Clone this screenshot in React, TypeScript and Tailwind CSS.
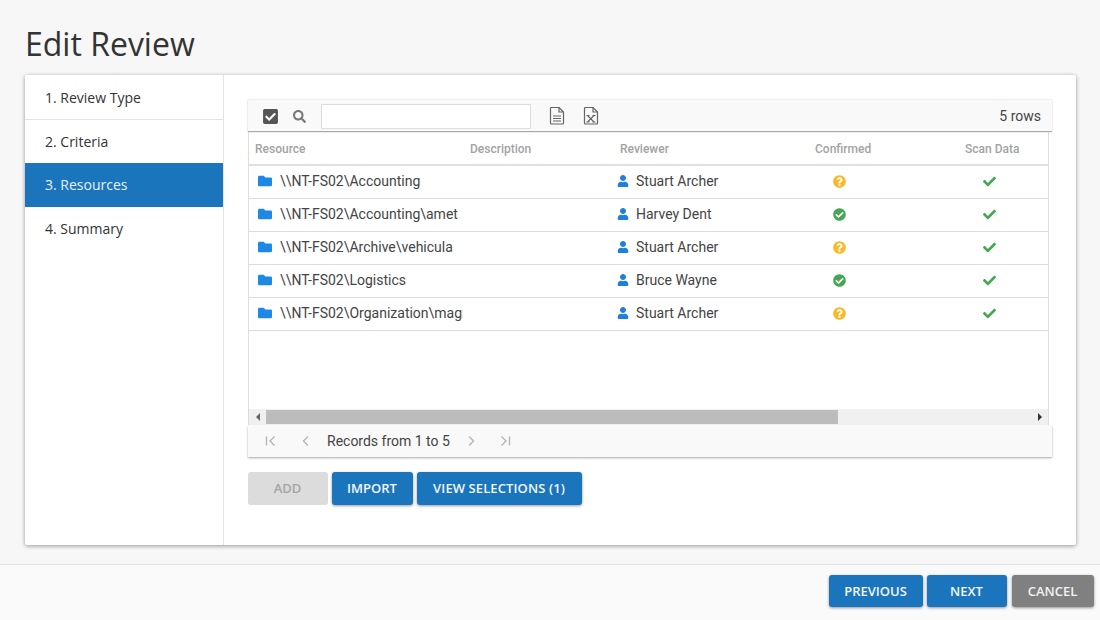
import { FaCheck, FaCheckCircle, FaCheckSquare, FaFolder, FaQuestionCircle, FaSearch, FaUser } from "react-icons/fa";

const steps = ["1. Review Type", "2. Criteria", "3. Resources", "4. Summary"];

const rows = [
  { path: "\\\\NT-FS02\\Accounting", reviewer: "Stuart Archer", confirmed: false },
  { path: "\\\\NT-FS02\\Accounting\\amet", reviewer: "Harvey Dent", confirmed: true },
  { path: "\\\\NT-FS02\\Archive\\vehicula", reviewer: "Stuart Archer", confirmed: false },
  { path: "\\\\NT-FS02\\Logistics", reviewer: "Bruce Wayne", confirmed: true },
  { path: "\\\\NT-FS02\\Organization\\magna", reviewer: "Stuart Archer", confirmed: false },
];

const headers = ["Resource", "Description", "Reviewer", "Confirmed", "Scan Data"];

const gridCols = "grid grid-cols-[214px_150px_195px_150px_90px]";
const btn = "h-[33px] rounded-[3px] text-[13px] font-semibold flex items-center justify-center pr-px";
const btnBlue = `${btn} bg-[#1b75bc] text-[#f2f7fb] shadow-[0_1px_3px_rgba(0,0,0,0.4)]`;

const DocIcon = ({ excel }: { excel?: boolean }) => (
  <svg width="16" height="18" viewBox="0 0 16 18" fill="none" stroke="#666" strokeWidth="1.2">
    <path d="M1.5 1.5a1 1 0 0 1 1-1h7.5l4.500 4.500v11a1 1 0 0 1-1 1h-11a1 1 0 0 1-1-1z" />
    <path d="M10 .5v4.500h4.500" />
    {excel ? (
      <path d="M4.500 8.500l6.500 6.500M11 8.500l-6.500 6.500M3.500 8.500h3M9.500 8.500h3M3.500 15h3M9.500 15h3" strokeWidth="1.100" />
    ) : (
      <path d="M4 9h8M4 11.500h8M4 14h8" />
    )}
  </svg>
);

const PagerIcon = ({ d }: { d: string }) => (
  <svg width="12" height="12" viewBox="0 0 12 12" fill="none" stroke="#b5b5b5" strokeWidth="1.400">
    <path d={d} />
  </svg>
);

export default function App() {
  return (
    <div className="w-[1100px] h-[620px] bg-[#f7f7f7] flex flex-col overflow-hidden font-['Open_Sans',sans-serif] text-[#333]">
      <h1 className="h-[75px] pl-[25px] pt-[22px] text-[32px] leading-[44px] text-[#333]">Edit Review</h1>

      <div className="ml-[25px] w-[1051px] h-[470px] bg-white rounded-[2px] shadow-[0_1px_4px_rgba(0,0,0,0.4)] flex">
        <div className="w-[199px] pt-px border-r border-[#e3e3e3]">
          {steps.map((s, i) => (
            <div
              key={s}
              className={`h-[43.500px] pl-5 pt-px flex items-center text-sm ${
                i === 2 ? "bg-[#1b75bc] text-[#e8f2fa]" : i < 1 ? "border-b border-[#e3e3e3]" : ""
              }`}
            >
              {s}
            </div>
          ))}
        </div>

        <div className="pl-6 pt-[25px] w-[828px] font-['Roboto',sans-serif]">
          <div className="h-[32px] w-[804px] pt-px bg-[#f9f9f9] border-b border-[#aaa] shadow-[0_0_2px_rgba(0,0,0,0.2)] flex items-center pl-[14px] pr-[11px] text-[#444]">
            <FaCheckSquare className="text-[#555] text-[17px]" />
            <FaSearch className="ml-[14px] text-[#777] text-[13px]" />
            <div className="ml-[15px] w-[210px] h-[25px] bg-white border border-[#ddd]" />
            <div className="ml-[18px]"><DocIcon /></div>
            <div className="ml-[18px]"><DocIcon excel /></div>
            <span className="ml-auto text-sm">5 rows</span>
          </div>

          <div className="w-[801px] h-[293px] border-x border-[#ddd] flex flex-col">
            <div className={`${gridCols} h-[34px] pt-[2px] shrink-0 border-b-2 border-[#e0e0e0] items-center text-xs font-medium text-[#a3a3a3]`}>
              {headers.map((h, i) => (
                <span key={h} className={i === 0 ? "pl-[6px]" : "pl-[7px]"}>{h}</span>
              ))}
            </div>
            {rows.map((r) => (
              <div key={r.path} className={`${gridCols} h-[33px] pb-[2px] shrink-0 border-b border-[#ddd] items-center text-sm text-[#444]`}>
                <div className="pl-[9px] flex items-center gap-2 overflow-hidden whitespace-nowrap">
                  <FaFolder className="text-[#1e88e5] text-sm shrink-0" />
                  <span>{r.path}</span>
                </div>
                <div />
                <div className="pl-[4px] flex items-center gap-[7px]">
                  <FaUser className="text-[#1e80dc] text-xs" />
                  <span>{r.reviewer}</span>
                </div>
                <div className="pl-[25px]">
                  {r.confirmed ? (
                    <FaCheckCircle className="text-[#45a752] text-[13px]" />
                  ) : (
                    <FaQuestionCircle className="text-[#fbb827] text-[13px]" />
                  )}
                </div>
                <div className="pl-[25px]">
                  <FaCheck className="text-[#45a752] text-[13px]" />
                </div>
              </div>
            ))}
            <div className="flex-1" />
            <div className="h-[16px] shrink-0 bg-[#f0f0f0] flex items-center">
              <div className="w-[17px] flex justify-center">
                <div className="border-y-[4px] border-r-[4px] border-y-transparent border-r-[#666]" />
              </div>
              <div className="w-[572px] h-[14px] bg-[#bcbcbc]" />
              <div className="ml-auto w-[17px] flex justify-center">
                <div className="border-y-[4px] border-l-[4px] border-y-transparent border-l-[#333]" />
              </div>
            </div>
          </div>

          <div className="mt-[1px] h-[31px] pb-px w-[804px] bg-[#f9f9f9] shadow-[0_1px_2px_rgba(0,0,0,0.35)] flex items-center pl-[17px] text-sm text-[#444]">
            <PagerIcon d="M1.500 1.500v9M9.500 1.500 5 6l4.500 4.500" />
            <div className="ml-[23px]"><PagerIcon d="M8 1.500 3.500 6 8 10.500" /></div>
            <span className="ml-[15px]">Records from 1 to 5</span>
            <div className="ml-[15px]"><PagerIcon d="M4 1.500 8.500 6 4 10.500" /></div>
            <div className="ml-[22px]"><PagerIcon d="M2.500 1.500 7 6l-4.500 4.500M10.500 1.500v9" /></div>
          </div>

          <div className="mt-[15px] flex gap-1 font-['Open_Sans',sans-serif]">
            <div className={`${btn} w-20 bg-[#dcdcdc] text-[#a5a5a5]`}>ADD</div>
            <div className={`${btnBlue} w-[81px]`}>IMPORT</div>
            <div className={`${btnBlue} w-[165px] tracking-[0.1px]`}>VIEW SELECTIONS (1)</div>
          </div>
        </div>
      </div>

      <div className="mt-[19px] flex-1 border-t border-[#e3e3e3] bg-[#fafafa] flex justify-end items-start pt-[10px] pr-[6px] gap-1">
        <div className={`${btnBlue} w-[94px] !h-[32px] pt-px`}>PREVIOUS</div>
        <div className={`${btnBlue} w-20 !h-[32px] pt-px`}>NEXT</div>
        <div className={`${btn} w-[82px] !h-[32px] pt-px ml-[1px] bg-[#808080] text-[#f2f2f2] shadow-[0_1px_3px_rgba(0,0,0,0.4)]`}>CANCEL</div>
      </div>
    </div>
  );
}
